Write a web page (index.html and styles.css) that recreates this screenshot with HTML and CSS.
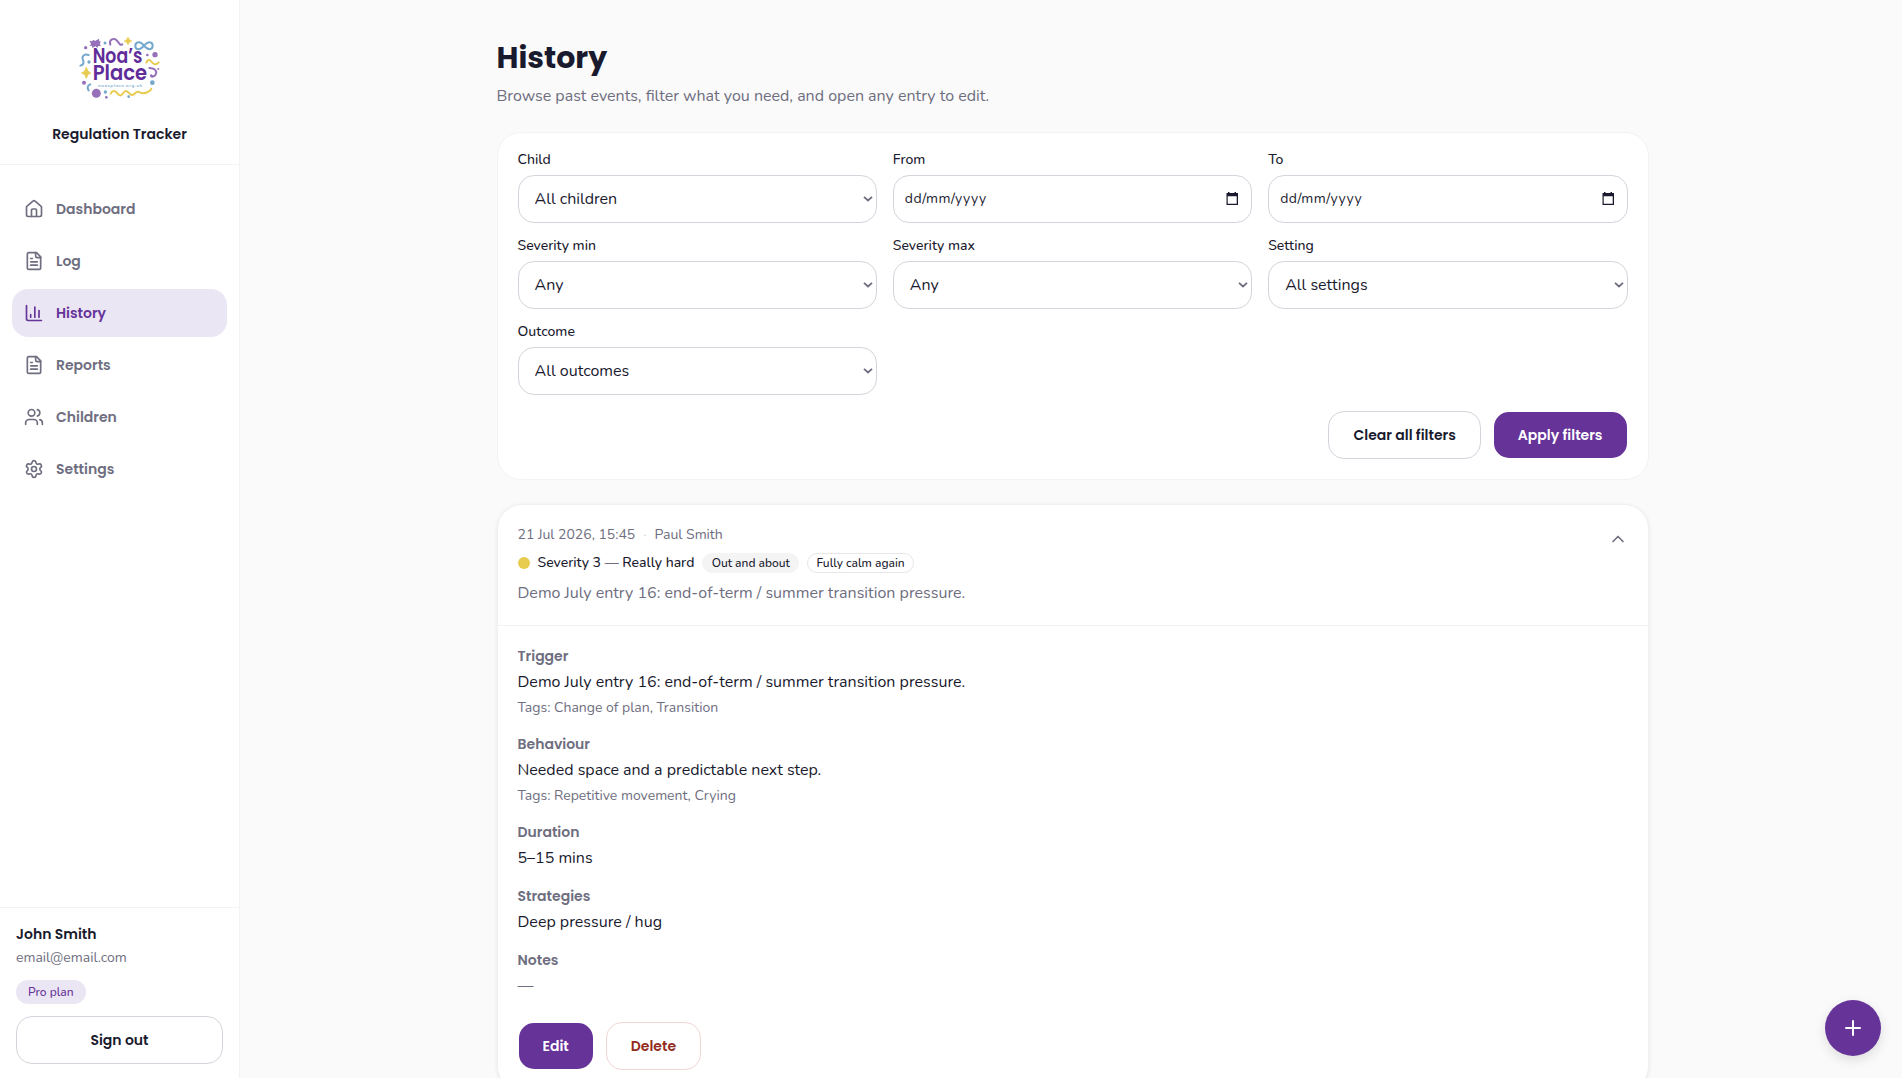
FILE: index.html
```html
<!DOCTYPE html>
<html lang="en-GB">
<head>
    <meta charset="UTF-8">
    <meta name="viewport" content="width=device-width, initial-scale=1.0">
    <title>History - Regulation Tracker</title>
    <link rel="stylesheet" href="styles.css">
</head>
<body>

<aside class="sidebar">
    <div class="brand">
        <svg class="logo" viewBox="0 0 300 255" role="img" aria-label="Noa's Place">
            <!-- lettering -->
            <g class="logo-name">
                <text x="68" y="115" textLength="149" lengthAdjust="spacingAndGlyphs">Noa’s</text>
                <text x="68" y="165" textLength="163" lengthAdjust="spacingAndGlyphs">Place</text>
            </g>
            <text class="logo-url" x="84" y="185" textLength="133">noasplace.org.uk</text>
            <!-- purple shapes -->
            <g fill="#9670b8">
                <path d="M58 47l8 2 4-5 5 4 12-7 1 8 5 1-4 6 4 7-8 0-3 5-6-4-9 5-1-7-7 1 4-7z"/>
                <circle cx="47" cy="68" r="5"/>
                <circle cx="255" cy="89" r="8"/>
                <circle cx="232" cy="90" r="4"/>
                <circle cx="42" cy="173" r="6"/>
                <circle cx="79" cy="205" r="13.500"/>
                <circle cx="109" cy="217" r="4"/>
                <circle cx="265" cy="132" r="3"/>
                <path d="M241 150q9-3 10 5-10 7-11-5z"/>
            </g>
            <g fill="none" stroke="#9670b8" stroke-width="6" stroke-linecap="round">
                <path d="M121 59c-5-16 12-22 20-12s10 15 16 11"/>
                <path d="M238 129c18 0 25 11 18 21-4 6-12 6-13 1"/>
            </g>
            <!-- yellow shapes -->
            <g fill="#e8cc50">
                <path d="M174 36q2 10 12 12-10 2-12 12-2-10-12-12 10-2 12-12z" stroke="#e8cc50" stroke-width="2"/>
                <path d="M49 127q2 14 13 17-11 2-13 16-2-14-14-16 12-3 14-17z" stroke="#e8cc50" stroke-width="3"/>
            </g>
            <g fill="none" stroke="#e8cc50" stroke-width="6" stroke-linecap="round" stroke-linejoin="round">
                <path d="M229 113c4-11 11-9 16-2s13 10 21 1"/>
                <path d="M122 206c6-12 14-9 20-1s11 9 18-1 13-5 18 1 11 7 18-1 12-3 18 0 27-3 30-13"/>
            </g>
            <!-- blue shapes -->
            <g fill="none" stroke="#74a7cc" stroke-width="6" stroke-linecap="round">
                <path d="M222 62c-7-9-12-11-17-10-12 2-12 20 0 21 7 0 12-6 17-11s10-11 17-10c12 1 12 20 0 21-7 0-12-5-17-11z"/>
                <path d="M56 90c-11-4-21 2-18 12 3 8 6 16-7 20"/>
                <path d="M61 178c-9 3-10 11-5 18"/>
            </g>
            <g fill="#74a7cc">
                <circle cx="105" cy="54" r="4.500"/>
                <circle cx="57" cy="111" r="5"/>
                <circle cx="247" cy="173" r="7"/>
                <circle cx="106" cy="201" r="5"/>
                <circle cx="176" cy="215" r="4"/>
            </g>
        </svg>
        <div class="brand-title">Regulation Tracker</div>
    </div>

    <nav class="nav">
        <a class="nav-item" href="#">
            <svg class="icon" viewBox="0 0 24 24"><path d="M15 21v-8a1 1 0 0 0-1-1h-4a1 1 0 0 0-1 1v8"/><path d="M3 10a2 2 0 0 1 .709-1.528l7-5.999a2 2 0 0 1 2.582 0l7 5.999A2 2 0 0 1 21 10v9a2 2 0 0 1-2 2H5a2 2 0 0 1-2-2z"/></svg>
            Dashboard
        </a>
        <a class="nav-item" href="#">
            <svg class="icon" viewBox="0 0 24 24"><path d="M15 2H6a2 2 0 0 0-2 2v16a2 2 0 0 0 2 2h12a2 2 0 0 0 2-2V7z"/><path d="M14 2v4a2 2 0 0 0 2 2h4"/><path d="M10 9H8"/><path d="M16 13H8"/><path d="M16 17H8"/></svg>
            Log
        </a>
        <a class="nav-item active" href="#">
            <svg class="icon" viewBox="0 0 24 24"><path d="M3 3v16a2 2 0 0 0 2 2h16"/><path d="M18 17V9"/><path d="M13 17V5"/><path d="M8 17v-3"/></svg>
            History
        </a>
        <a class="nav-item" href="#">
            <svg class="icon" viewBox="0 0 24 24"><path d="M15 2H6a2 2 0 0 0-2 2v16a2 2 0 0 0 2 2h12a2 2 0 0 0 2-2V7z"/><path d="M14 2v4a2 2 0 0 0 2 2h4"/><path d="M10 9H8"/><path d="M16 13H8"/><path d="M16 17H8"/></svg>
            Reports
        </a>
        <a class="nav-item" href="#">
            <svg class="icon" viewBox="0 0 24 24"><path d="M16 21v-2a4 4 0 0 0-4-4H6a4 4 0 0 0-4 4v2"/><circle cx="9" cy="7" r="4"/><path d="M22 21v-2a4 4 0 0 0-3-3.870"/><path d="M16 3.130a4 4 0 0 1 0 7.750"/></svg>
            Children
        </a>
        <a class="nav-item" href="#">
            <svg class="icon" viewBox="0 0 24 24"><path d="M9.671 4.136a2.340 2.340 0 0 1 4.659 0 2.340 2.340 0 0 0 3.319 1.915 2.340 2.340 0 0 1 2.330 4.033 2.340 2.340 0 0 0 0 3.831 2.340 2.340 0 0 1-2.330 4.033 2.340 2.340 0 0 0-3.319 1.915 2.340 2.340 0 0 1-4.659 0 2.340 2.340 0 0 0-3.320-1.915 2.340 2.340 0 0 1-2.330-4.033 2.340 2.340 0 0 0 0-3.831A2.340 2.340 0 0 1 6.350 6.051a2.340 2.340 0 0 0 3.319-1.915"/><circle cx="12" cy="12" r="3"/></svg>
            Settings
        </a>
    </nav>

    <div class="account">
        <div class="account-name">John Smith</div>
        <div class="account-email">email@email.com</div>
        <span class="plan">Pro plan</span>
        <button class="btn btn-outline">Sign out</button>
    </div>
</aside>

<main class="main">
    <div class="content">
        <h1>History</h1>
        <p class="subtitle">Browse past events, filter what you need, and open any entry to edit.</p>

        <form class="filters">
            <div class="filter-grid">
                <div class="field">
                    <label for="child">Child</label>
                    <select id="child"><option>All children</option></select>
                </div>
                <div class="field">
                    <label for="from">From</label>
                    <input type="text" id="from" class="date" placeholder="dd/mm/yyyy">
                </div>
                <div class="field">
                    <label for="to">To</label>
                    <input type="text" id="to" class="date" placeholder="dd/mm/yyyy">
                </div>
                <div class="field">
                    <label for="severity-min">Severity min</label>
                    <select id="severity-min"><option>Any</option></select>
                </div>
                <div class="field">
                    <label for="severity-max">Severity max</label>
                    <select id="severity-max"><option>Any</option></select>
                </div>
                <div class="field">
                    <label for="setting">Setting</label>
                    <select id="setting"><option>All settings</option></select>
                </div>
                <div class="field">
                    <label for="outcome">Outcome</label>
                    <select id="outcome"><option>All outcomes</option></select>
                </div>
            </div>
            <div class="filter-actions">
                <button type="button" class="btn btn-outline">Clear all filters</button>
                <button type="button" class="btn btn-primary">Apply filters</button>
            </div>
        </form>

        <article class="entry">
            <header class="entry-header">
                <div class="entry-summary">
                    <div class="entry-meta"><span>21 Jul 2026, 15:45</span><span class="sep">·</span><span>Paul Smith</span></div>
                    <div class="entry-severity">
                        <span class="dot"></span>
                        <span class="severity">Severity 3 <span class="muted">—</span> Really hard</span>
                        <span class="badge">Out and about</span>
                        <span class="badge badge-outline">Fully calm again</span>
                    </div>
                    <p class="entry-text">Demo July entry 16: end-of-term / summer transition pressure.</p>
                </div>
                <svg class="icon chevron" viewBox="0 0 24 24"><path d="m18 15-6-6-6 6"/></svg>
            </header>
            <div class="entry-body">
                <section>
                    <h2>Trigger</h2>
                    <p>Demo July entry 16: end-of-term / summer transition pressure.</p>
                    <p class="tags">Tags: Change of plan, Transition</p>
                </section>
                <section>
                    <h2>Behaviour</h2>
                    <p>Needed space and a predictable next step.</p>
                    <p class="tags">Tags: Repetitive movement, Crying</p>
                </section>
                <section>
                    <h2>Duration</h2>
                    <p>5–15 mins</p>
                </section>
                <section>
                    <h2>Strategies</h2>
                    <p>Deep pressure / hug</p>
                </section>
                <section>
                    <h2>Notes</h2>
                    <p class="muted">—</p>
                </section>
                <div class="entry-actions">
                    <button class="btn btn-primary">Edit</button>
                    <button class="btn btn-danger">Delete</button>
                </div>
            </div>
        </article>
    </div>
</main>

<button class="fab" aria-label="Log entry">
    <svg viewBox="0 0 24 24"><path d="M5 12h14"/><path d="M12 5v14"/></svg>
</button>

</body>
</html>
```
FILE: styles.css
```css
* {
    box-sizing: border-box;
}
body {
    margin: 0;
    display: flex;
    height: 100vh;
    overflow: hidden;
    font-family: "Nunito", "Open Sans", sans-serif;
    font-size: 16px;
    line-height: 24px;
    color: #1a1a2e;
    background-color: #fafafa;
}
h1, h2, p {
    margin: 0;
}
.muted {
    color: #6e6e80;
}
.icon {
    width: 20px;
    height: 20px;
    flex-shrink: 0;
    fill: none;
    stroke: currentColor;
    stroke-width: 2;
    stroke-linecap: round;
    stroke-linejoin: round;
}

/* Sidebar */
.sidebar {
    width: 240px;
    flex-shrink: 0;
    display: flex;
    flex-direction: column;
    background-color: #fff;
    border-right: 1px solid #f3f3f4;
}
.brand {
    display: flex;
    flex-direction: column;
    align-items: center;
    gap: 14px;
    padding: 25px 0 20px;
    border-bottom: 1px solid #f3f3f4;
}
.logo {
    display: block;
    width: 100px;
    height: 85px;
}
.logo-name {
    font-family: "Poppins", sans-serif;
    font-weight: 600;
    font-size: 62px;
    fill: #5f2c99;
}
.logo-url {
    font-size: 14px;
    font-weight: 700;
    fill: #8fb8d6;
}
.brand-title {
    font-family: "Poppins", sans-serif;
    font-size: 14px;
    font-weight: 600;
    line-height: 20px;
}
.nav {
    flex: 1;
    display: flex;
    flex-direction: column;
    gap: 4px;
    padding: 20px 12px;
}
.nav-item {
    display: flex;
    align-items: center;
    gap: 12px;
    height: 48px;
    padding: 0 12px;
    border-radius: 16px;
    font-family: "Poppins", sans-serif;
    font-size: 14px;
    font-weight: 600;
    color: #6e6e80;
    text-decoration: none;
}
.nav-item.active {
    background-color: #ebe6f4;
    color: #663399;
}
.account {
    display: flex;
    flex-direction: column;
    align-items: flex-start;
    padding: 16px 16px 14px;
    border-top: 1px solid #f3f3f4;
}
.account-name {
    font-family: "Poppins", sans-serif;
    font-size: 14px;
    font-weight: 600;
    line-height: 20px;
}
.account-email {
    margin-top: 4px;
    font-size: 14px;
    line-height: 20px;
    color: #6e6e80;
}
.plan {
    margin: 12px 0;
    padding: 0 12px;
    border-radius: 12px;
    font-size: 12px;
    font-weight: 500;
    background-color: #ebe6f4;
    color: #663399;
}
.account .btn {
    width: 100%;
}

/* Buttons */
.btn {
    height: 48px;
    padding: 0 24px;
    border: 1px solid transparent;
    border-radius: 16px;
    font-family: "Poppins", sans-serif;
    font-size: 14px;
    font-weight: 600;
    background-color: #fff;
    background-clip: padding-box;
    color: #1a1a2e;
    cursor: pointer;
}
.btn-outline {
    border-color: #d4d4dc;
}
.btn-primary {
    background-color: #663399;
    color: #fff;
}
.btn-danger {
    border-color: #efd8d4;
    color: #922b21;
}

/* Page content */
.main {
    flex: 1;
    display: flex;
    justify-content: center;
    align-items: flex-start;
    padding: 39px 0 0 3px;
}
.content {
    width: 1152px;
}
h1 {
    font-family: "Poppins", sans-serif;
    font-size: 30px;
    font-weight: 700;
    line-height: 38px;
}
.subtitle {
    margin-top: 7px;
    color: #6e6e80;
}

/* Filters */
.filters {
    margin-top: 24px;
    padding: 17px 20px 20px;
    border: 1px solid #f3f3f4;
    border-radius: 24px;
    background-color: #fff;
}
.filter-grid {
    display: grid;
    grid-template-columns: repeat(3, 1fr);
    gap: 13px 16px;
}
.field {
    display: flex;
    flex-direction: column;
    gap: 5px;
}
.field label {
    font-size: 14px;
    font-weight: 500;
    line-height: 20px;
}
.field select, .field input {
    appearance: none;
    width: 100%;
    height: 48px;
    margin: 0;
    padding: 0 16px;
    border: 1px solid #d4d4dc;
    border-radius: 16px;
    font-family: inherit;
    font-size: 16px;
    color: #1a1a2e;
    background: #fff no-repeat;
}
.field select {
    background-image: url("data:image/svg+xml,%3Csvg xmlns='http://www.w3.org/2000/svg' width='10' height='6' fill='none' stroke='%236e6e80' stroke-width='1.8'%3E%3Cpath d='M1 .8l4 3.700 4-3.700'/%3E%3C/svg%3E");
    background-position: right 3px center;
}
.field .date {
    padding: 0 11px 2px;
    font-size: 14px;
    letter-spacing: 0.55px;
    background-image: url("data:image/svg+xml,%3Csvg xmlns='http://www.w3.org/2000/svg' width='12' height='13'%3E%3Cpath fill='%231a1a2e' fill-rule='evenodd' d='M2 0h1.500v1h5V0H10v1h2v12H.500V1H2zM1.700 4.300v7.500h9V4.300z'/%3E%3C/svg%3E");
    background-position: right 13px top 16px;
}
.field .date::placeholder {
    color: #1a1a2e;
}
.filter-actions {
    display: flex;
    justify-content: flex-end;
    gap: 12px;
    margin-top: 16px;
}

/* History entry */
.entry {
    margin-top: 25px;
    margin-right: 1px;
    margin-left: 1px;
    border-radius: 24px;
    background-color: #fff;
    box-shadow: 0 0 0 1px #f1f1f3, 0 1px 4px 1px rgba(0, 0, 0, 0.08);
}
.entry-header {
    display: flex;
    justify-content: space-between;
    padding: 20px;
    border-bottom: 1px solid #f3f3f4;
}
.entry-meta {
    display: flex;
    gap: 8px;
    font-size: 14px;
    line-height: 20px;
    color: #6e6e80;
}
.sep {
    color: #d4d4dc;
}
.entry-severity {
    display: flex;
    align-items: center;
    gap: 8px;
    margin: 8px 0;
}
.dot {
    width: 12px;
    height: 12px;
    border-radius: 50%;
    background-color: #e8cc50;
}
.severity {
    font-size: 14px;
    font-weight: 500;
    line-height: 20px;
}
.badge {
    padding: 0 8.3px;
    border: 1px solid #f4f4f5;
    border-radius: 10px;
    font-size: 12px;
    font-weight: 500;
    line-height: 18px;
    background-color: #f4f4f5;
}
.badge-outline {
    border-color: #e6e6ea;
    background-color: #fff;
}
.entry-text {
    color: #6e6e80;
}
.chevron {
    margin-top: 4px;
    color: #6e6e80;
}
.entry-body {
    display: flex;
    flex-direction: column;
    gap: 16px;
    padding: 20px;
}
.entry-body section {
    display: flex;
    flex-direction: column;
    gap: 4px;
}
.entry-body h2 {
    font-family: "Poppins", sans-serif;
    font-size: 14px;
    font-weight: 600;
    line-height: 20px;
    color: #6e6e80;
}
.entry-body .tags {
    font-size: 14px;
    line-height: 20px;
    color: #6e6e80;
}
.entry-actions {
    display: flex;
    gap: 12px;
    margin-top: 8px;
}

/* Floating add button */
.fab {
    position: fixed;
    right: 21px;
    bottom: 22px;
    display: flex;
    align-items: center;
    justify-content: center;
    width: 56px;
    height: 56px;
    padding: 0;
    border: none;
    border-radius: 50%;
    background-color: #663399;
    box-shadow: 0 4px 12px rgba(0, 0, 0, 0.12);
    cursor: pointer;
}
.fab svg {
    width: 24px;
    height: 24px;
    fill: none;
    stroke: #fff;
    stroke-width: 2;
    stroke-linecap: round;
}
```
